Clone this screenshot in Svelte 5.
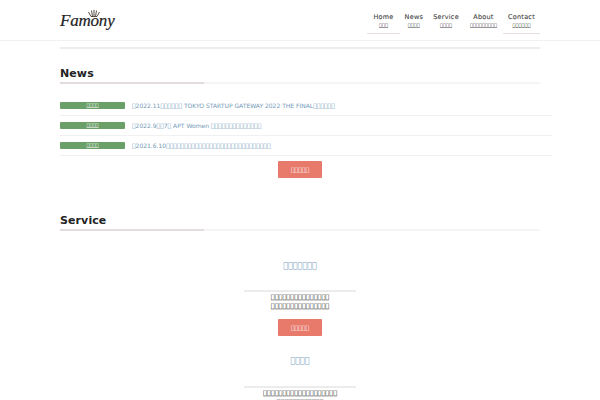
<script>
  const T = (n) => '\uE000'.repeat(n);
  const nav = [
    { en: 'Home', n: 3, on: true, wide: true },
    { en: 'News', n: 4 },
    { en: 'Service', n: 4 },
    { en: 'About', n: 9, wide: true },
    { en: 'Contact', n: 6, on: true }
  ];
  const news = [
    { pre: '2022.11', a: 6, mid: ' TOKYO STARTUP GATEWAY 2022 THE FINAL', b: 6 },
    { pre: '2022.9', a: 2, mid: '7', b: 1, tail: ' APT Women ', c: 14 },
    { pre: '2021.6.10', a: 29, mid: '', b: 0 }
  ];
</script>

<header class="top">
  <div class="logo">
    <svg class="crown" viewBox="0 0 14 8" width="14" height="8" aria-hidden="true">
      <path d="M4 7.5 H10 M4 7.5 L1.5 3 M5.5 7.5 L4.5 1.5 M7 7.5 V0.8 M8.5 7.5 L9.5 1.5 M10 7.5 L12.5 3" fill="none" stroke="#4a3d33" stroke-width="0.9" />
    </svg>
    <span>Famony</span>
  </div>
  <nav>
    {#each nav as item}
      <div class="item" class:on={item.on} class:wide={item.wide}>
        <b>{item.en}</b>
        <small>{T(item.n)}</small>
      </div>
    {/each}
  </nav>
</header>

<main>
  <div class="rule"></div>
  <h2>News</h2>
  <div class="hline"></div>
  <ul>
    {#each news as row}
      <li>
        <span class="tag">{T(4)}</span>
        <span class="txt">{T(1)}{row.pre}{T(row.a)}{row.mid}{T(row.b)}{row.tail ?? ''}{T(row.c ?? 0)}</span>
      </li>
    {/each}
  </ul>
  <span class="btn first">{T(5)}</span>

  <h2 class="svc">Service</h2>
  <div class="hline"></div>

  <section>
    <h3>{T(7)}</h3>
    <div class="bar"></div>
    <p>{T(15)}<br />{T(15)}</p>
    <span class="btn">{T(5)}</span>
  </section>
  <section class="second">
    <h3>{T(4)}</h3>
    <div class="bar"></div>
    <p>{T(19)}<br />{T(12)}</p>
  </section>
</main>

<style>
  :global(body) {
    margin: 0;
    background: #fff;
    font-family: "DejaVu Sans", sans-serif;
    overflow: hidden;
  }
  .top {
    height: 40px;
    border-bottom: 1px solid #f2f1f1;
    display: flex;
    justify-content: space-between;
    padding: 0 60px;
  }
  .logo {
    position: relative;
    width: 56px;
    font: italic 17px/1 "Liberation Serif", serif;
    letter-spacing: -.2px;
    color: #222;
    padding-top: 12px;
    -webkit-text-stroke: .2px #222;
    box-sizing: border-box;
  }
  .crown { position: absolute; left: 27px; top: 9px; }
  nav { display: flex; height: 34px; }
  .item {
    display: flex;
    flex-direction: column;
    align-items: center;
    padding: 13px 5px 0;
    box-sizing: border-box;
    color: #444;
  }
  .item.wide { padding-left: 6px; padding-right: 6px; }
  .item.on { border-bottom: 1px solid #e8dede; }
  .item b { font-weight: 400; font-size: 6.5px; line-height: 8px; letter-spacing: .25px; -webkit-text-stroke: .1px #444; }
  .item small { font-size: 5px; line-height: 9px; }
  main { padding: 0 60px; }
  .rule {
    margin-top: 6px;
    height: 2px;
    background: #ececec;
  }
  h2 {
    margin: 18px 0 0;
    font-size: 11px;
    line-height: 14px;
    font-weight: 700;
    letter-spacing: .1px;
    color: #222;
  }
  .svc { margin-top: 36px; }
  .hline {
    margin-top: 1px;
    height: 2px;
    background: linear-gradient(to right, #e4dcdc 0 144px, #f6f5f5 144px);
  }
  ul { list-style: none; margin: 12px -12px 0 0; padding: 0; }
  li {
    height: 20px;
    display: flex;
    align-items: center;
    gap: 7px;
    border-bottom: 1px solid #f1f1f1;
    box-sizing: border-box;
  }
  .tag {
    width: 65px;
    height: 7px;
    background: #6a9f68;
    color: #fff;
    font-size: 5px;
    line-height: 7px;
    text-align: center;
    border-radius: 1px;
  }
  .txt { font-size: 6px; color: #7399b8; white-space: nowrap; }
  .btn {
    display: block;
    width: 44px;
    height: 17px;
    margin: 0 auto;
    line-height: 17px;
    background: #e87a6c;
    color: #fff;
    font-size: 6px;
    text-align: center;
    border-radius: 1px;
  }
  .btn.first { margin-top: 5px; }
  section { text-align: center; }
  h3 {
    margin: 29px 0 0;
    font-size: 8px;
    line-height: 12px;
    font-weight: 400;
    color: #7ea3c0;
  }
  .second h3 { margin-top: 19px; }
  .bar {
    width: 112px;
    height: 2px;
    margin: 18px auto 0;
    background: #ececec;
  }
  .second .bar { margin-top: 19px; }
  p {
    margin: 1px 0 8px;
    font-size: 6.5px;
    line-height: 9px;
    color: #222;
  }
</style>
